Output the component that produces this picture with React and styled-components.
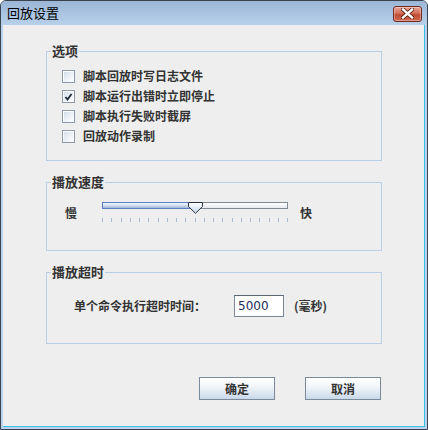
import React from 'react'
import styled, { createGlobalStyle } from 'styled-components'

const GlobalStyle = createGlobalStyle`
    html, body {
        margin: 0;
        padding: 0;
        background: #ffffff;
    }
    body {
        font-family: "Noto Sans CJK SC", "Liberation Sans", sans-serif;
    }
`

const options = [
    { label: '脚本回放时写日志文件', checked: false },
    { label: '脚本运行出错时立即停止', checked: true },
    { label: '脚本执行失败时截屏', checked: false },
    { label: '回放动作录制', checked: false },
]

const TICKS = 21

function App() {
  return (
      <>
        <GlobalStyle />
        <Window>
            <TitleBar>
                <Title>回放设置</Title>
                <CloseButton>
                    <svg width="13" height="11" viewBox="0 0 13 11">
                        <path d="M2 1.5 L11 9.5 M11 1.5 L2 9.5" stroke="#5a1a10" strokeWidth="4" strokeLinecap="square" />
                        <path d="M2 1.5 L11 9.5 M11 1.5 L2 9.5" stroke="#ffffff" strokeWidth="2.4" strokeLinecap="square" />
                    </svg>
                </CloseButton>
            </TitleBar>
            <Body>
                <Group pt={7} pb={14} pl={15}>
                    <Legend pl={15}>选项</Legend>
                    {options.map(o => (
                        <OptionRow key={o.label}>
                            <CheckBox>
                                {o.checked &&
                                    <svg width="11" height="11" viewBox="0 0 11 11">
                                        <path d="M2.5 6 L4.5 8.5 L8.5 3" stroke="#1e2a36" strokeWidth="1.8" fill="none" />
                                    </svg>
                                }
                            </CheckBox>
                            <OptionText>{o.label}</OptionText>
                        </OptionRow>
                    ))}
                </Group>

                <Group pt={12} pb={28} pl={18}>
                    <Legend pl={18}>播放速度</Legend>
                    <SpeedRow>
                        <SpeedLabel>慢</SpeedLabel>
                        <Slider>
                            <Track>
                                <TrackFill style={{ width: `${(93 / 186) * 100}%` }} />
                                <TrackRest />
                                <Thumb>
                                    <svg width="15" height="12" viewBox="0 0 15 12">
                                        <defs>
                                            <linearGradient id="tg" x1="0" y1="0" x2="0" y2="1">
                                                <stop offset="0" stopColor="#ffffff" />
                                                <stop offset="1" stopColor="#c5d7ec" />
                                            </linearGradient>
                                        </defs>
                                        <path d="M0.5 0.5 H14.5 V4.5 L7.5 11.3 L0.5 4.5 Z" fill="url(#tg)" stroke="#2a3440" strokeWidth="1" />
                                    </svg>
                                </Thumb>
                            </Track>
                            <Ticks>
                                {Array.from({ length: TICKS }).map((_, i) => <Tick key={i} />)}
                            </Ticks>
                        </Slider>
                        <SpeedLabel>快</SpeedLabel>
                    </SpeedRow>
                </Group>

                <Group pt={15} pb={26} pl={27}>
                    <Legend pl={27}>播放超时</Legend>
                    <TimeoutRow>
                        <FieldLabel>单个命令执行超时时间：</FieldLabel>
                        <NumberInput defaultValue="5000" />
                        <Unit>(毫秒)</Unit>
                    </TimeoutRow>
                </Group>

                <ButtonBar>
                    <Button>确定</Button>
                    <Button>取消</Button>
                </ButtonBar>
            </Body>
        </Window>
      </>
  )
}

const Window = styled.div`
    width: 428px;
    height: 430px;
    box-sizing: border-box;
    border: 1px solid #3a4450;
    border-radius: 6px 6px 0 0;
    background: #b9d1ea;
    display: flex;
    flex-direction: column;
    overflow: hidden;
`
const TitleBar = styled.div`
    height: 24px;
    flex: none;
    display: flex;
    align-items: center;
    justify-content: space-between;
    padding: 0 5px 0 6px;
    background: linear-gradient(to bottom, #9bb6d6, #b8d0ea);
`
const Title = styled.div`
    font-size: 13px;
    color: #000;
    line-height: 16px;
`
const CloseButton = styled.div`
    width: 29px;
    height: 16px;
    box-sizing: border-box;
    margin-top: 1px;
    border: 1px solid #6e2a20;
    border-radius: 3px;
    background: linear-gradient(to bottom, #e9a596 0%, #d46e58 45%, #c04a32 55%, #d06a52 100%);
    box-shadow: inset 0 0 0 1px rgba(255, 255, 255, 0.35);
    display: flex;
    align-items: center;
    justify-content: center;
`
const Body = styled.div`
    flex: 1;
    margin: 0 2px 2px 2px;
    background: #eeeeee;
    border-right: 1px solid #35c2ee;
    border-bottom: 1px solid #35c2ee;
    padding: 18px 42px 0 43px;
    display: flex;
    flex-direction: column;
`
const Group = styled.fieldset`
    margin: 0 0 13px 0;
    padding: ${p => p.pt}px 10px ${p => p.pb}px ${p => p.pl}px;
    border: 1px solid #b8cfe5;
    min-width: 0;
    display: flex;
    flex-direction: column;
`
const Legend = styled.legend`
    padding: 0 1px;
    margin-left: ${p => 4 - p.pl}px;
    font-size: 13px;
    line-height: 16px;
    font-weight: bold;
    color: #333;
`
const OptionRow = styled.div`
    height: 20px;
    display: flex;
    align-items: center;
`
const CheckBox = styled.div`
    width: 13px;
    height: 13px;
    box-sizing: border-box;
    border: 1px solid #8c9aaa;
    background: linear-gradient(135deg, #cfdbe8 0%, #eef2f7 55%, #ffffff 100%);
    box-shadow: inset 1px 1px 0 #ffffff;
    margin-right: 8px;
    display: flex;
    align-items: center;
    justify-content: center;
`
const OptionText = styled.span`
    font-size: 12px;
    font-weight: bold;
    color: #333;
    line-height: 16px;
`
const SpeedRow = styled.div`
    display: flex;
    align-items: center;
`
const SpeedLabel = styled.span`
    font-size: 12px;
    font-weight: bold;
    color: #333;
    line-height: 14px;
    margin-top: 2px;
`
const Slider = styled.div`
    width: 186px;
    margin: 0 12px 0 25px;
    display: flex;
    flex-direction: column;
`
const Track = styled.div`
    position: relative;
    height: 7px;
    display: flex;
`
const TrackFill = styled.div`
    height: 7px;
    box-sizing: border-box;
    border: 1px solid #5b7fc4;
    border-right: none;
    background: linear-gradient(to bottom, #f4f8fc, #c6d6ea 60%, #9fb6d4);
`
const TrackRest = styled.div`
    flex: 1;
    height: 7px;
    box-sizing: border-box;
    border: 1px solid #808a94;
    border-left: none;
    background: linear-gradient(to bottom, #ffffff, #e6e9ee);
`
const Thumb = styled.div`
    position: absolute;
    left: 86px;
    top: 0;
    line-height: 0;
`
const Ticks = styled.div`
    margin-top: 9px;
    height: 4px;
    display: flex;
    justify-content: space-between;
`
const Tick = styled.div`
    width: 1px;
    height: 4px;
    background: #a9b8cc;
`
const TimeoutRow = styled.div`
    display: flex;
    align-items: center;
`
const FieldLabel = styled.span`
    width: 160px;
    font-size: 12px;
    font-weight: bold;
    color: #333;
    line-height: 16px;
`
const NumberInput = styled.input`
    width: 50px;
    height: 22px;
    box-sizing: border-box;
    margin: 0 10px 0 0;
    padding: 0 0 0 3px;
    border: 1px solid #7a8898;
    border-top-color: #5c6874;
    background: #ffffff;
    font-family: "DejaVu Sans", "Liberation Sans", sans-serif;
    font-size: 12px;
    color: #1c2c5a;
    outline: none;
`
const Unit = styled.span`
    font-size: 12px;
    font-weight: bold;
    color: #333;
    line-height: 16px;
`
const ButtonBar = styled.div`
    display: flex;
    justify-content: flex-end;
    gap: 30px;
    margin-top: 20px;
    padding-right: 1px;
`
const Button = styled.div`
    width: 76px;
    height: 23px;
    box-sizing: border-box;
    border: 1px solid #7b8a99;
    background: linear-gradient(to bottom, #ffffff 0%, #f2f6fa 40%, #c9d9ea 100%);
    display: flex;
    align-items: center;
    justify-content: center;
    font-size: 12px;
    font-weight: bold;
    color: #333;
`

export default App
